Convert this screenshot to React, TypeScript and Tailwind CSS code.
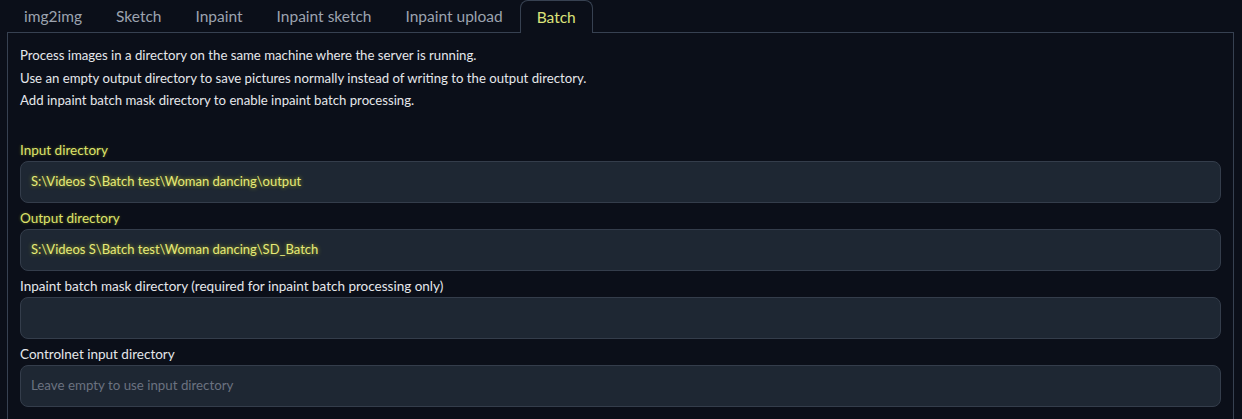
import { type ReactNode } from 'react'

const tabs = ['img2img', 'Sketch', 'Inpaint', 'Inpaint sketch', 'Inpaint upload', 'Batch']

const notes = [
  'Process images in a directory on the same machine where the server is running.',
  'Use an empty output directory to save pictures normally instead of writing to the output directory.',
  'Add inpaint batch mask directory to enable inpaint batch processing.',
]

function Field({
  label,
  value,
  placeholder,
  highlight,
}: {
  label: ReactNode
  value?: string
  placeholder?: string
  highlight?: boolean
}) {
  return (
    <div className="flex flex-col">
      <span
        className={
          highlight
            ? 'h-5 text-[13.5px] leading-5 text-[#dde36c] [text-shadow:0_0_3px_rgba(190,200,40,0.45)]'
            : 'h-5 text-[13.5px] leading-5 text-[#e5e7eb]'
        }
      >
        {label}
      </span>
      <div className="mt-px flex h-[42px] items-center rounded-lg border border-[#343d4b] bg-[#1e2733] px-[10px]">
        {value ? (
          <span className="text-[13px] text-[#e6ea78] [text-shadow:0_0_4px_rgba(200,210,30,0.7)]">{value}</span>
        ) : (
          <span className="text-[13.3px] text-[#6b7280]">{placeholder}</span>
        )}
      </div>
    </div>
  )
}

export default function App() {
  return (
    <div className="h-[419px] w-[1242px] overflow-hidden bg-[#0b0f19] pl-[7px] pr-2 font-['Lato','Liberation_Sans',sans-serif]">
      <div className="flex h-8">
        {tabs.map(tab =>
          tab === 'Batch' ? (
            <div
              key={tab}
              className="relative -mb-px flex items-center rounded-t-lg border border-b-0 border-[#374151] bg-[#0b0f19] px-4 pt-px text-[15.5px] text-[#dce37a]"
            >
              {tab}
            </div>
          ) : (
            <div key={tab} className="flex items-center px-[17px] pt-px text-[15.5px] text-[#9ca3af]">
              {tab}
            </div>
          )
        )}
      </div>
      <div className="h-[400px] border border-[#374151] px-3 pt-[11px]">
        <div className="flex flex-col text-[13.2px] leading-[22.5px] text-[#e5e7eb]">
          {notes.map(note => (
            <p key={note}>{note}</p>
          ))}
        </div>
        <div className="mt-[28px] flex flex-col gap-[5px]">
          <Field label="Input directory" value="S:\Videos S\Batch test\Woman dancing\output" highlight />
          <Field label="Output directory" value="S:\Videos S\Batch test\Woman dancing\SD_Batch" highlight />
          <Field label="Inpaint batch mask directory (required for inpaint batch processing only)" />
          <Field label="Controlnet input directory" placeholder="Leave empty to use input directory" />
        </div>
      </div>
    </div>
  )
}
